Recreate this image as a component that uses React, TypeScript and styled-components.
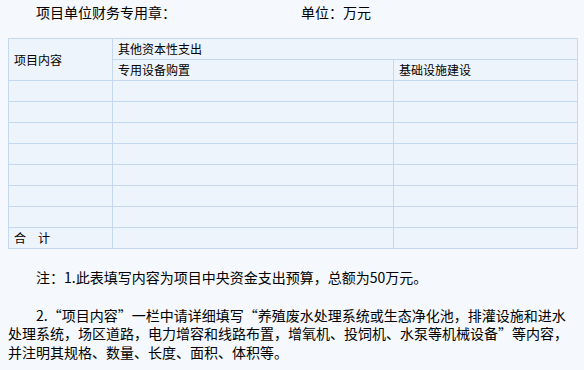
import * as React from 'react';
import styled, { createGlobalStyle } from 'styled-components';

const GlobalStyle = createGlobalStyle`
  html, body {
    margin: 0;
    padding: 0;
    background: #f5f8fd;
  }

  body {
    font-family: "Noto Sans CJK SC", "Liberation Sans", sans-serif;
    color: #000;
  }
`;

const emptyRows = 7;

export default function App() {
  return (
    <>
      <GlobalStyle />
      <Page>
        <TitleRow>
          <TitleText>项目单位财务专用章：</TitleText>
          <TitleText>单位：万元</TitleText>
        </TitleRow>

        <Table>
          <colgroup>
            <col style={{ width: 104 }} />
            <col style={{ width: 281 }} />
            <col />
          </colgroup>
          <tbody>
            <Row>
              <Cell rowSpan={2}>项目内容</Cell>
              <Cell colSpan={2}>其他资本性支出</Cell>
            </Row>
            <Row>
              <Cell>专用设备购置</Cell>
              <Cell>基础设施建设</Cell>
            </Row>
            {Array.from({ length: emptyRows }).map((_, i) => (
              <Row key={i}>
                <Cell />
                <Cell />
                <Cell />
              </Row>
            ))}
            <Row>
              <Cell>合　计</Cell>
              <Cell />
              <Cell />
            </Row>
          </tbody>
        </Table>

        <Notes>
          <Note>注：1.此表填写内容为项目中央资金支出预算，总额为50万元。</Note>
          <Note>
            2.“项目内容”一栏中请详细填写“养殖废水处理系统或生态净化池，排灌设施和进水处理系统，场区道路，电力增容和线路布置，增氧机、投饲机、水泵等机械设备”等内容，并注明其规格、数量、长度、面积、体积等。
          </Note>
        </Notes>
      </Page>
    </>
  );
}

const Page = styled.div`
  padding: 0 8px;
  width: 584px;
  box-sizing: border-box;
`;

const TitleRow = styled.div`
  display: grid;
  grid-template-columns: 293px auto;
  height: 24px;
  align-items: center;
`;

const TitleText = styled.span`
  font-size: 14px;
  line-height: 24px;

  &:first-child {
    padding-left: 28px;
  }
`;

const Table = styled.table`
  margin-top: 14px;
  width: 570px;
  border-collapse: collapse;
  table-layout: fixed;
  background: #eef4fc;
`;

const Row = styled.tr`
  height: 21px;
`;

const Cell = styled.td`
  border: 1px solid #c4d8ef;
  padding: 0 5px;
  font-size: 12px;
  line-height: 14px;
  vertical-align: middle;
  white-space: nowrap;
`;

const Notes = styled.div`
  margin-top: 19px;
`;

const Note = styled.p`
  margin: 0 0 19px;
  font-size: 14px;
  line-height: 18.5px;
  text-indent: 28px;
`;
